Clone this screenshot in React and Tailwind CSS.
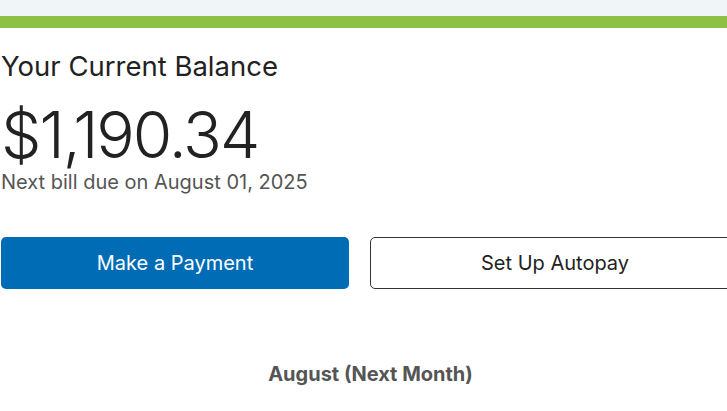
export default function App() {
  return (
    <div className="w-[727px] h-[411px] overflow-hidden bg-white font-['Inter',sans-serif]">
      <div className="h-4 bg-[#f0f5f8]" />
      <div className="h-3 bg-[#8fc046]" />
      <div className="pl-px">
        <h2 className="mt-[21px] text-[27.5px] leading-[34px] text-[#222] font-normal">Your Current Balance</h2>
        <div className="mt-[22px] text-[64px] leading-[60px] text-[#222] font-light tracking-[-2px]">$1,190.34</div>
        <p className="mt-[7px] text-[20px] leading-[20px] text-[#555]">Next bill due on August 01, 2025</p>
        <div className="mt-[45px] flex gap-[21px] w-[760px]">
          <button className="w-[348px] h-[52px] rounded-[5px] bg-[#006cb5] text-white text-[20px]">
            Make a Payment
          </button>
          <button className="w-[370px] h-[52px] rounded-[5px] border border-[#333] bg-white text-[#222] text-[20px]">
            Set Up Autopay
          </button>
        </div>
        <div className="mt-[70px] w-[739px] text-center text-[20px] font-bold text-[#555]">August (Next Month)</div>
      </div>
    </div>
  );
}
